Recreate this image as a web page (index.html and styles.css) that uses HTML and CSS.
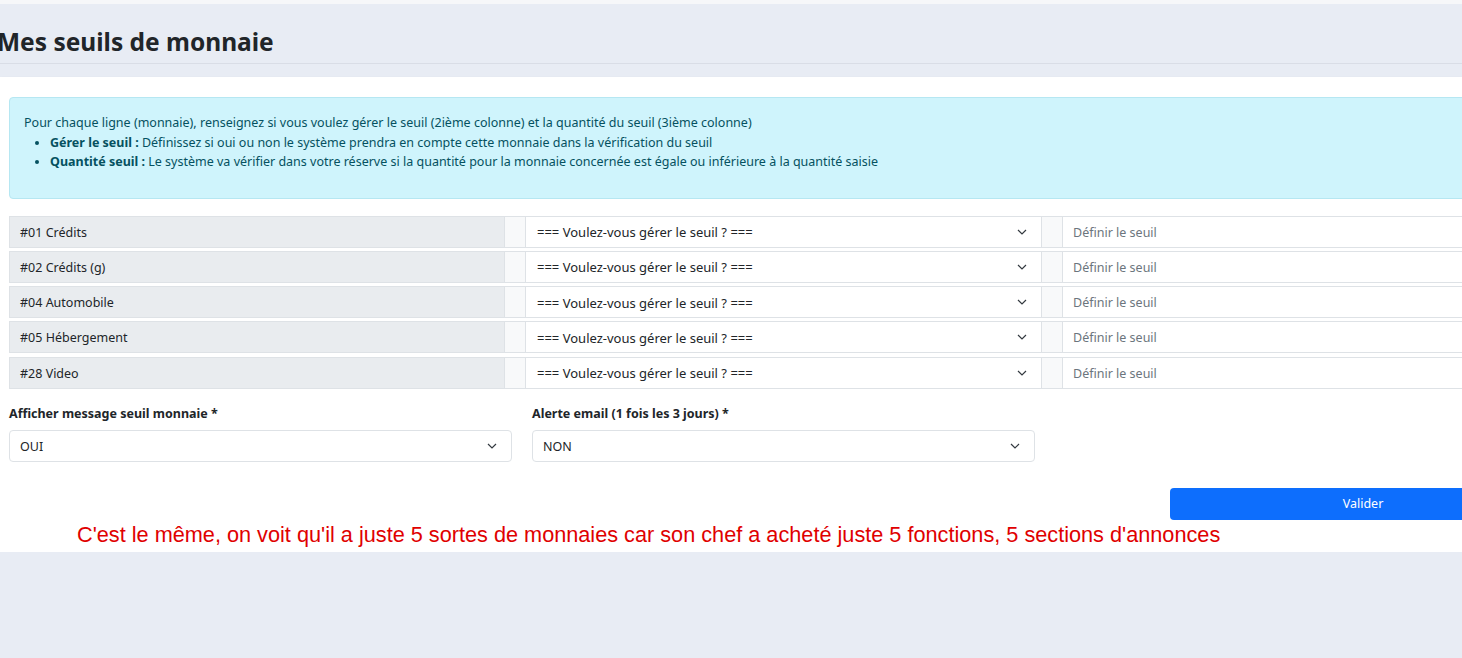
FILE: index.html
```html
<!DOCTYPE html>
<html>
<head>
	<meta charset="utf-8">
	<title>Mes seuils de monnaie</title>
	<link rel="stylesheet" href="styles.css">
</head>
<body>
	<div class="top_strip"></div>
	<div class="page_header">
		<h1>Mes seuils de monnaie</h1>
	</div>

	<div class="card">
		<div class="content">
			<div class="alert_info">
				<p>Pour chaque ligne (monnaie), renseignez si vous voulez gérer le seuil (2ième colonne) et la quantité du seuil (3ième colonne)</p>
				<ul>
					<li><b>Gérer le seuil :</b> Définissez si oui ou non le système prendra en compte cette monnaie dans la vérification du seuil</li>
					<li><b>Quantité seuil :</b> Le système va vérifier dans votre réserve si la quantité pour la monnaie concernée est égale ou inférieure à la quantité saisie</li>
				</ul>
			</div>

			<div class="seuil_row">
				<div class="cell_label">#01 Crédits</div>
				<div class="cell_gap"></div>
				<div class="cell_select"><span>=== Voulez-vous gérer le seuil ? ===</span><svg class="chevron" width="10" height="6" viewBox="0 0 10 6"><polyline points="1,1 5,5 9,1"/></svg></div>
				<div class="cell_gap"></div>
				<div class="cell_input">Définir le seuil</div>
			</div>
			<div class="seuil_row">
				<div class="cell_label">#02 Crédits (g)</div>
				<div class="cell_gap"></div>
				<div class="cell_select"><span>=== Voulez-vous gérer le seuil ? ===</span><svg class="chevron" width="10" height="6" viewBox="0 0 10 6"><polyline points="1,1 5,5 9,1"/></svg></div>
				<div class="cell_gap"></div>
				<div class="cell_input">Définir le seuil</div>
			</div>
			<div class="seuil_row">
				<div class="cell_label">#04 Automobile</div>
				<div class="cell_gap"></div>
				<div class="cell_select"><span>=== Voulez-vous gérer le seuil ? ===</span><svg class="chevron" width="10" height="6" viewBox="0 0 10 6"><polyline points="1,1 5,5 9,1"/></svg></div>
				<div class="cell_gap"></div>
				<div class="cell_input">Définir le seuil</div>
			</div>
			<div class="seuil_row">
				<div class="cell_label">#05 Hébergement</div>
				<div class="cell_gap"></div>
				<div class="cell_select"><span>=== Voulez-vous gérer le seuil ? ===</span><svg class="chevron" width="10" height="6" viewBox="0 0 10 6"><polyline points="1,1 5,5 9,1"/></svg></div>
				<div class="cell_gap"></div>
				<div class="cell_input">Définir le seuil</div>
			</div>
			<div class="seuil_row">
				<div class="cell_label">#28 Video</div>
				<div class="cell_gap"></div>
				<div class="cell_select"><span>=== Voulez-vous gérer le seuil ? ===</span><svg class="chevron" width="10" height="6" viewBox="0 0 10 6"><polyline points="1,1 5,5 9,1"/></svg></div>
				<div class="cell_gap"></div>
				<div class="cell_input">Définir le seuil</div>
			</div>

			<div class="options">
				<div class="option_col">
					<label>Afficher message seuil monnaie *</label>
					<div class="form_select">OUI<svg class="chevron" width="10" height="6" viewBox="0 0 10 6"><polyline points="1,1 5,5 9,1"/></svg></div>
				</div>
				<div class="option_col">
					<label>Alerte email (1 fois les 3 jours) *</label>
					<div class="form_select">NON<svg class="chevron" width="10" height="6" viewBox="0 0 10 6"><polyline points="1,1 5,5 9,1"/></svg></div>
				</div>
			</div>

			<div class="submit_row">
				<button type="button" class="btn_valider">Valider</button>
			</div>
			<p class="note">C'est le même, on voit qu'il a juste 5 sortes de monnaies car son chef a acheté juste 5 fonctions, 5 sections d'annonces</p>
		</div>
	</div>
</body>
</html>
```

FILE: styles.css
```css
body {
	margin : 0;
	background-color : #e8ecf4;
	font-family : "Noto Sans", "Open Sans", sans-serif;
	font-size : 12.5px;
	color : #212529;
	overflow : hidden;
}

.top_strip {
	height : 4px;
	background-color : #f6f7f9;
}

.page_header {
	background-color : #e8ecf4;
	height : 73px;
}
	.page_header > h1 {
		margin : 0 0 0 -3px;
		height : 59px;
		line-height : 76px;
		font-size : 24.5px;
		font-weight : 700;
		color : #212529;
		border-bottom : 1px solid #d9dde6;
	}

.card {
	background-color : #fff;
	box-shadow : 0 2px 4px rgba(0,0,0,0.08);
	overflow : hidden;
	height : 475px;
}
	.content {
		width : 1570px;
		padding : 20px 0 0 9px;
	}

.alert_info {
	background-color : #cff4fc;
	border : 1px solid #b6e7f2;
	border-radius : 4px;
	color : #055160;
	padding : 15px 14px 16px 14px;
	line-height : 19.5px;
	margin-bottom : 17px;
}
	.alert_info p {
		margin : 0;
	}
	.alert_info ul {
		margin : 0 0 10px 0;
		padding-left : 26px;
	}
	.alert_info b {
		font-weight : 700;
	}

.seuil_row {
	display : flex;
	height : 32px;
	margin-bottom : 3.3px;
	line-height : 32px;
}
	.seuil_row > div {
		border : 1px solid #dee2e6;
		box-sizing : border-box;
		margin-left : -1px;
	}
	.cell_label {
		width : 496px;
		background-color : #e9ecef;
		padding-left : 10px;
		margin-left : 0 !important;
	}
	.cell_gap {
		width : 22px;
		background-color : #f8f9fa;
	}
	.cell_select {
		width : 517px;
		background-color : #fff;
		padding-left : 11px;
		display : flex;
		justify-content : space-between;
		align-items : center;
		padding-right : 14px;
	}
		.cell_select > span {
			font-size : 13px;
			padding-top : 1px;
		}
	.cell_input {
		width : 517px;
		background-color : #fff;
		padding-left : 10px;
		color : #6c757d;
	}

.chevron {
	fill : none;
	stroke : #343a40;
	stroke-width : 1.2;
}

.options {
	display : flex;
	gap : 20px;
	margin-top : 15px;
}
	.option_col {
		width : 503px;
	}
	.option_col > label {
		display : block;
		font-weight : 700;
		line-height : 20px;
		margin-bottom : 6px;
	}
	.form_select {
		height : 32px;
		box-sizing : border-box;
		border : 1px solid #dee2e6;
		border-radius : 4px;
		padding : 1px 14px 0 10px;
		display : flex;
		justify-content : space-between;
		align-items : center;
	}

.submit_row {
	margin-top : 26px;
	padding-left : 1161px;
}
	.btn_valider {
		display : block;
		width : 386px;
		height : 32px;
		border : 0;
		border-radius : 4px;
		background-color : #0d6efd;
		color : #fff;
		font-family : "Noto Sans", "Open Sans", sans-serif;
		font-size : 12.5px;
	}

.note {
	margin : 3px 0 0 68px;
	font-family : "Liberation Sans", Arial, sans-serif;
	font-size : 21.7px;
	line-height : 24px;
	color : #e00000;
}
```
